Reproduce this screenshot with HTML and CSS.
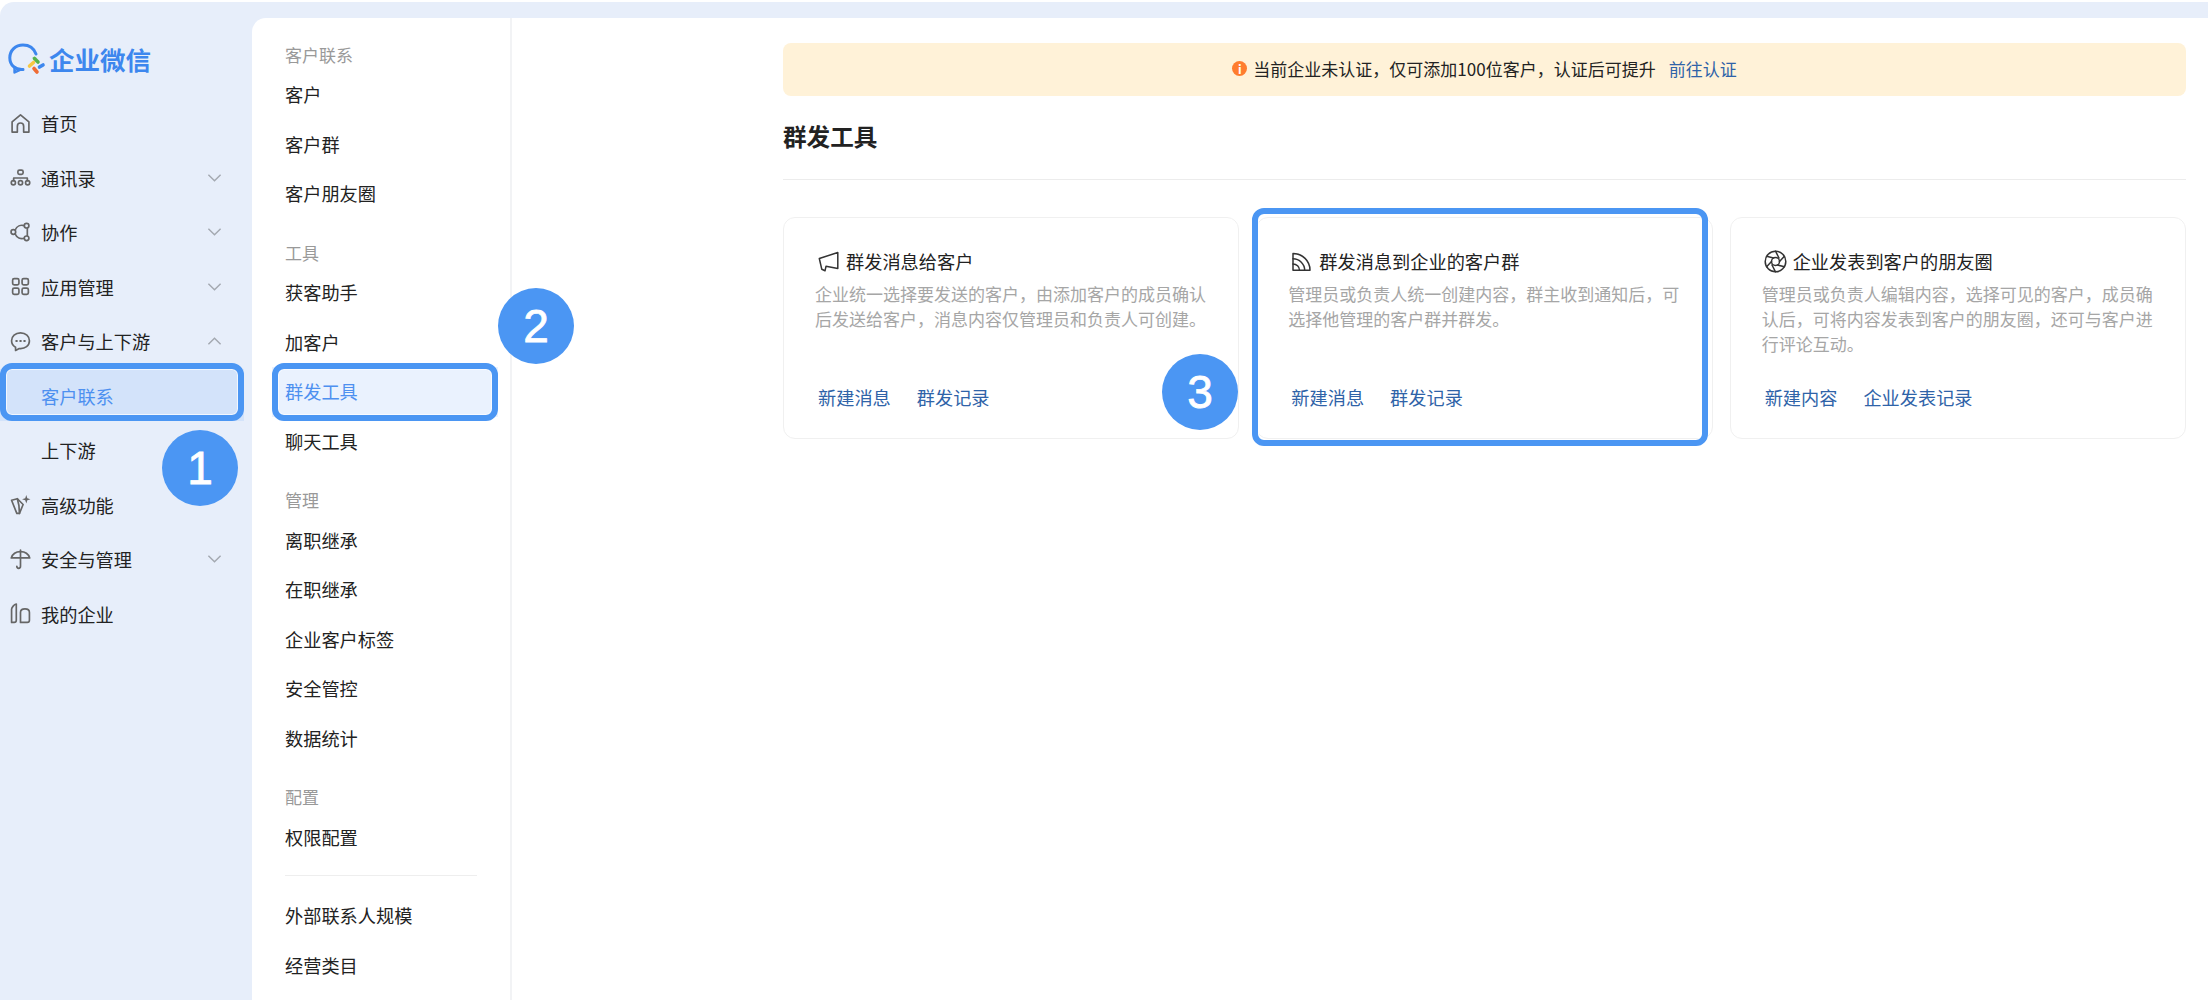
FILE: index.html
```html
<!DOCTYPE html>
<html lang="zh-CN">
<head>
    <meta charset="UTF-8">
    <meta name="viewport" content="width=device-width, initial-scale=1.0">
    <title>企业微信 - 群发工具</title>
    <link rel="stylesheet" href="styles.css">
</head>
<body>

<div class="app">
    <aside class="sidebar">
        <div class="logo">
            <svg class="logo-icon" viewBox="0 0 38 34" fill="none">
                <path d="M15 26.500C7.500 27 1.800 22.500 1.800 14.800C1.800 7.500 7.500 2 15 2C20.800 2 25.800 5 28 11" stroke="#3d87ee" stroke-width="3" stroke-linecap="round"/>
                <path d="M6.500 24V29.500L12 26.800" stroke="#3d87ee" stroke-width="2.400" stroke-linejoin="round" stroke-linecap="round"/>
                <path d="M26.500 15.500L30 19" stroke="#56b34c" stroke-width="3.600" stroke-linecap="round"/>
                <path d="M25.500 19.500L21.500 23" stroke="#f7c843" stroke-width="3.600" stroke-linecap="round"/>
                <path d="M26 25.500L29 29" stroke="#ef6c35" stroke-width="3.600" stroke-linecap="round"/>
                <path d="M31.500 24L35 22" stroke="#3d87ee" stroke-width="3.600" stroke-linecap="round"/>
            </svg>
            <span>企业微信</span>
        </div>
        <nav>
            <a class="nav-item">
                <svg class="nav-icon" viewBox="0 0 20 20"><path d="M2 8.500L10 1.800L18 8.500V18.200H13V12.500A3 3 0 0 0 7 12.500V18.200H2Z"/></svg>
                <span>首页</span>
            </a>
            <a class="nav-item">
                <svg class="nav-icon" viewBox="0 0 20 20"><rect x="7.500" y="3" width="5" height="4" rx="1.500"/><path d="M3.500 13V10.500H16.500V13"/><circle cx="3.200" cy="15" r="2"/><circle cx="10" cy="15" r="2"/><circle cx="16.800" cy="15" r="2"/></svg>
                <span>通讯录</span>
                <svg class="chevron" viewBox="0 0 16 10"><path d="M1.500 1.500L8 8L14.500 1.500"/></svg>
            </a>
            <a class="nav-item">
                <svg class="nav-icon" viewBox="0 0 20 20"><circle cx="15.800" cy="3.500" r="2.200"/><circle cx="15.800" cy="15.500" r="2.200"/><circle cx="3.200" cy="9.500" r="2.200"/><path d="M13.600 3.500C10 2.500 6.500 4 5 7.500M5 11.500C6.500 15 10 16.500 13.600 15.500M16.500 6V13"/></svg>
                <span>协作</span>
                <svg class="chevron" viewBox="0 0 16 10"><path d="M1.500 1.500L8 8L14.500 1.500"/></svg>
            </a>
            <a class="nav-item">
                <svg class="nav-icon" viewBox="0 0 20 20"><rect x="2.500" y="2.500" width="6" height="6" rx="1.500"/><rect x="11.500" y="2.500" width="6" height="6" rx="1.500"/><rect x="2.500" y="11.500" width="6" height="6" rx="1.500"/><rect x="11.500" y="11.500" width="6" height="6" rx="1.500"/></svg>
                <span>应用管理</span>
                <svg class="chevron" viewBox="0 0 16 10"><path d="M1.500 1.500L8 8L14.500 1.500"/></svg>
            </a>
            <a class="nav-item">
                <svg class="nav-icon" viewBox="0 0 20 20"><path d="M10 1.800C5 1.800 1.500 5.200 1.500 9.300C1.500 12 3 14.200 5.300 15.500V18.500L8.800 16.700C14.500 17.300 18.500 13.800 18.500 9.300C18.500 5.200 15 1.800 10 1.800Z"/><path class="dots" d="M6 9.500H6.500M9.800 9.500H10.300M13.600 9.500H14.100"/></svg>
                <span>客户与上下游</span>
                <svg class="chevron" viewBox="0 0 16 10"><path d="M1.500 8.500L8 2L14.500 8.500"/></svg>
            </a>
            <a class="nav-item nav-active">
                <span class="nav-sub">客户联系</span>
                <i class="mark"></i>
            </a>
            <a class="nav-item">
                <span class="nav-sub">上下游</span>
            </a>
            <a class="nav-item">
                <svg class="nav-icon" viewBox="0 0 20 20"><path d="M1.500 6L7 4.500L12.500 10L9 18.500L6.500 18.500Z"/><path d="M7 4.500L8.500 11L9 18.500"/><path class="spark" d="M15.500 1L16.500 4L19.500 5L16.500 6L15.500 9L14.500 6L11.500 5L14.500 4Z"/></svg>
                <span>高级功能</span>
            </a>
            <a class="nav-item">
                <svg class="nav-icon" viewBox="0 0 20 20"><path d="M1.200 8.500C2.500 4.500 6 2.500 10 2.500C14 2.500 17.500 4.500 18.800 8.500H1.200Z"/><path d="M10 1V16.500C10 19 6.500 19 6.500 16.500"/></svg>
                <span>安全与管理</span>
                <svg class="chevron" viewBox="0 0 16 10"><path d="M1.500 1.500L8 8L14.500 1.500"/></svg>
            </a>
            <a class="nav-item">
                <svg class="nav-icon" viewBox="0 0 20 20"><path d="M1.500 18.500V6C1.500 4 4 1.500 6 1V16.500C6 18 5.500 18.500 4 18.500Z"/><path d="M10 18.500V9C10 4.500 18.500 4.500 18.500 9V16.500C18.500 18 18 18.500 16.500 18.500Z"/></svg>
                <span>我的企业</span>
            </a>
        </nav>
    </aside>

    <div class="main">
        <nav class="subnav">
            <div class="subnav-title">客户联系</div>
            <a class="subnav-item">客户</a>
            <a class="subnav-item">客户群</a>
            <a class="subnav-item">客户朋友圈</a>

            <div class="subnav-title">工具</div>
            <a class="subnav-item">获客助手</a>
            <a class="subnav-item">加客户</a>
            <a class="subnav-item subnav-active">群发工具<i class="mark"></i></a>
            <a class="subnav-item">聊天工具</a>

            <div class="subnav-title">管理</div>
            <a class="subnav-item">离职继承</a>
            <a class="subnav-item">在职继承</a>
            <a class="subnav-item">企业客户标签</a>
            <a class="subnav-item">安全管控</a>
            <a class="subnav-item">数据统计</a>

            <div class="subnav-title">配置</div>
            <a class="subnav-item">权限配置</a>
            <div class="subnav-line"></div>
            <a class="subnav-item">外部联系人规模</a>
            <a class="subnav-item">经营类目</a>
        </nav>

        <main class="content">
            <div class="notice">
                <span class="notice-icon">i</span>
                <span>当前企业未认证，仅可添加100位客户，认证后可提升</span>
                <a class="link notice-link">前往认证</a>
            </div>

            <h1 class="page-title">群发工具</h1>

            <div class="cards">
                <div class="card">
                    <div class="card-title">
                        <span class="card-icon">
                            <svg class="icon-horn" viewBox="0 0 21 21"><path d="M19.800 1.500V17.500L8 15.300L7 19.800L3.800 18.300L1.300 7.500Z"/></svg>
                        </span>
                        群发消息给客户
                    </div>
                    <p class="card-desc">企业统一选择要发送的客户，由添加客户的成员确认后发送给客户，消息内容仅管理员和负责人可创建。</p>
                    <div class="card-links">
                        <a class="link">新建消息</a>
                        <a class="link">群发记录</a>
                    </div>
                </div>

                <div class="card">
                    <div class="card-title">
                        <span class="card-icon">
                            <svg class="icon-rss" viewBox="0 0 19 19"><path d="M1 1.500C10.500 1.500 18 9 18 18.200H1Z"/><path d="M1 6.800C7.500 6.800 12.700 12 12.700 18.200"/><path d="M1 12C4.600 12 7.500 14.800 7.500 18.200"/></svg>
                        </span>
                        群发消息到企业的客户群
                    </div>
                    <p class="card-desc">管理员或负责人统一创建内容，群主收到通知后，可选择他管理的客户群并群发。</p>
                    <div class="card-links">
                        <a class="link">新建消息</a>
                        <a class="link">群发记录</a>
                    </div>
                    <i class="mark"></i>
                </div>

                <div class="card">
                    <div class="card-title">
                        <span class="card-icon">
                            <svg class="icon-aperture" viewBox="0 0 23 23"><circle cx="11.500" cy="11.500" r="10.300"/><circle cx="11.500" cy="11.500" r="4"/><path d="M11.500 1.200L15 8M20.400 6.300L15.500 11.500M20.400 16.700L13.500 15M11.500 21.800L8 15M2.600 16.700L7.500 11.500M2.600 6.300L9.500 8"/></svg>
                        </span>
                        企业发表到客户的朋友圈
                    </div>
                    <p class="card-desc">管理员或负责人编辑内容，选择可见的客户，成员确认后，可将内容发表到客户的朋友圈，还可与客户进行评论互动。</p>
                    <div class="card-links">
                        <a class="link">新建内容</a>
                        <a class="link">企业发表记录</a>
                    </div>
                </div>
            </div>
        </main>
    </div>

    <div class="badge badge-1">1</div>
    <div class="badge badge-2">2</div>
    <div class="badge badge-3">3</div>
</div>

</body>
</html>
```

FILE: styles.css
```css
body {
    font-family: "Noto Sans CJK SC", sans-serif;
    margin: 0;
    padding: 0;
    background-color: #fff;
    color: #222;
    overflow: hidden;
}
.app {
    position: relative;
    display: flex;
    height: 998px;
    margin-top: 2px;
    background-color: #e7eefa;
    border-top-left-radius: 14px;
    overflow: hidden;
}
.mark {
    position: absolute;
    border: 6px solid #4b96f3;
    border-radius: 12px;
    box-sizing: border-box;
    box-shadow: inset 0 0 0 1px rgba(255,255,255,0.7);
}

/* left sidebar */
.sidebar {
    width: 252px;
    flex-shrink: 0;
}
.logo {
    display: flex;
    align-items: center;
    gap: 3px;
    height: 94px;
    padding: 18px 0 0 8px;
    box-sizing: border-box;
    color: #3d87ee;
    font-size: 25.5px;
    font-weight: 700;
}
.logo-icon {
    width: 38px;
    height: 34px;
    margin-top: 4px;
}
.nav-item {
    position: relative;
    display: flex;
    align-items: center;
    gap: 10px;
    height: 54.5px;
    padding-left: 10px;
    padding-right: 30px;
    box-sizing: border-box;
    font-size: 18.2px;
}
.nav-sub {
    padding-left: 31px;
}
.nav-icon {
    width: 21px;
    height: 21px;
    flex-shrink: 0;
    fill: none;
    stroke: #666;
    stroke-width: 1.6;
    stroke-linejoin: round;
    stroke-linecap: round;
}
.nav-icon .dots {
    stroke-width: 2;
}
.nav-icon .spark {
    fill: #666;
    stroke: none;
}
.chevron {
    width: 15px;
    height: 10px;
    margin-left: auto;
    fill: none;
    stroke: #a3a8b0;
    stroke-width: 1.5;
}
.nav-active {
    height: 52px;
    margin-right: 8px;
    margin-bottom: 2.5px;
    padding-top: 2px;
    color: #4d90f0;
    background-color: #d3e3fa;
}
.nav-active .mark {
    top: -6px;
    bottom: 0;
    left: 0;
    right: 0;
}

/* white area */
.main {
    flex: 1;
    display: flex;
    margin-top: 16px;
    background-color: #fff;
    border-top-left-radius: 14px;
}
.subnav {
    width: 260px;
    flex-shrink: 0;
    padding: 21.5px 12px 0 20px;
    box-sizing: border-box;
    border-right: 2px solid #f2f3f5;
}
.subnav-title {
    height: 30.5px;
    line-height: 30.5px;
    margin-top: 19px;
    padding-left: 13px;
    color: #999;
    font-size: 17px;
}
.subnav-title:first-child {
    margin-top: 0;
}
.subnav-item {
    position: relative;
    display: block;
    height: 49.5px;
    line-height: 49.5px;
    padding-left: 13px;
    font-size: 18.2px;
}
.subnav-active {
    color: #4d90f0;
    background-color: #eaf2fe;
}
.subnav-active .mark {
    top: -4px;
    bottom: -4px;
    left: 0;
    right: 0;
}
.subnav-line {
    height: 1px;
    margin: 13px 21px 15px 13px;
    background-color: #eee;
}

/* content */
.content {
    flex: 1;
    padding: 25px 22px 0 271px;
    min-width: 0;
}
.notice {
    display: flex;
    align-items: center;
    justify-content: center;
    height: 53px;
    padding-bottom: 2px;
    box-sizing: border-box;
    background-color: #fff2d8;
    border-radius: 8px;
    font-size: 17px;
}
.notice-icon {
    width: 15px;
    height: 15px;
    line-height: 15px;
    margin-right: 6px;
    border-radius: 50%;
    background-color: #ff7d2e;
    color: #fff;
    font-size: 12px;
    font-weight: 700;
    text-align: center;
}
.notice-link {
    margin-left: 13px;
}
.link {
    color: #2f63a8;
}
.page-title {
    margin: 25px 0 0;
    height: 30px;
    line-height: 30px;
    padding-bottom: 28px;
    border-bottom: 1px solid #ececec;
    font-size: 23.6px;
    font-weight: 700;
}
.cards {
    display: grid;
    grid-template-columns: repeat(3, 1fr);
    gap: 17px;
    margin-top: 37px;
}
.card {
    position: relative;
    display: flex;
    flex-direction: column;
    height: 222px;
    padding: 30px 31px 28px;
    box-sizing: border-box;
    border: 1px solid #f0f0f0;
    border-radius: 12px;
}
.card > .mark {
    top: -10px;
    bottom: -8px;
    left: -5px;
    right: 4px;
}
.card-title {
    display: flex;
    align-items: center;
    height: 26px;
    font-size: 18.2px;
}
.card-icon {
    display: flex;
    justify-content: center;
    width: 27px;
    margin-right: 4px;
}
.card-icon svg {
    fill: none;
    stroke: #333;
    stroke-width: 1.5;
    stroke-linejoin: round;
    stroke-linecap: round;
}
.icon-horn {
    width: 21px;
    height: 21px;
}
.icon-rss {
    width: 19px;
    height: 19px;
}
.icon-aperture {
    width: 23px;
    height: 23px;
}
.card-desc {
    margin: 6.5px 0 0;
    color: #a6a6a6;
    font-size: 17px;
    line-height: 25px;
}
.card-links {
    display: flex;
    gap: 26px;
    margin-top: auto;
    padding-left: 3px;
    line-height: 26px;
    font-size: 18.2px;
}

/* numbered callouts */
.badge {
    position: absolute;
    width: 76px;
    height: 76px;
    line-height: 76px;
    border-radius: 50%;
    background-color: #4b96f3;
    color: #fff;
    font-family: "Liberation Sans", sans-serif;
    font-size: 46px;
    text-align: center;
    -webkit-text-stroke: 0.8px #fff;
}
.badge-1 {
    left: 162px;
    top: 428px;
}
.badge-2 {
    left: 498px;
    top: 286px;
}
.badge-3 {
    left: 1162px;
    top: 352px;
}
```
